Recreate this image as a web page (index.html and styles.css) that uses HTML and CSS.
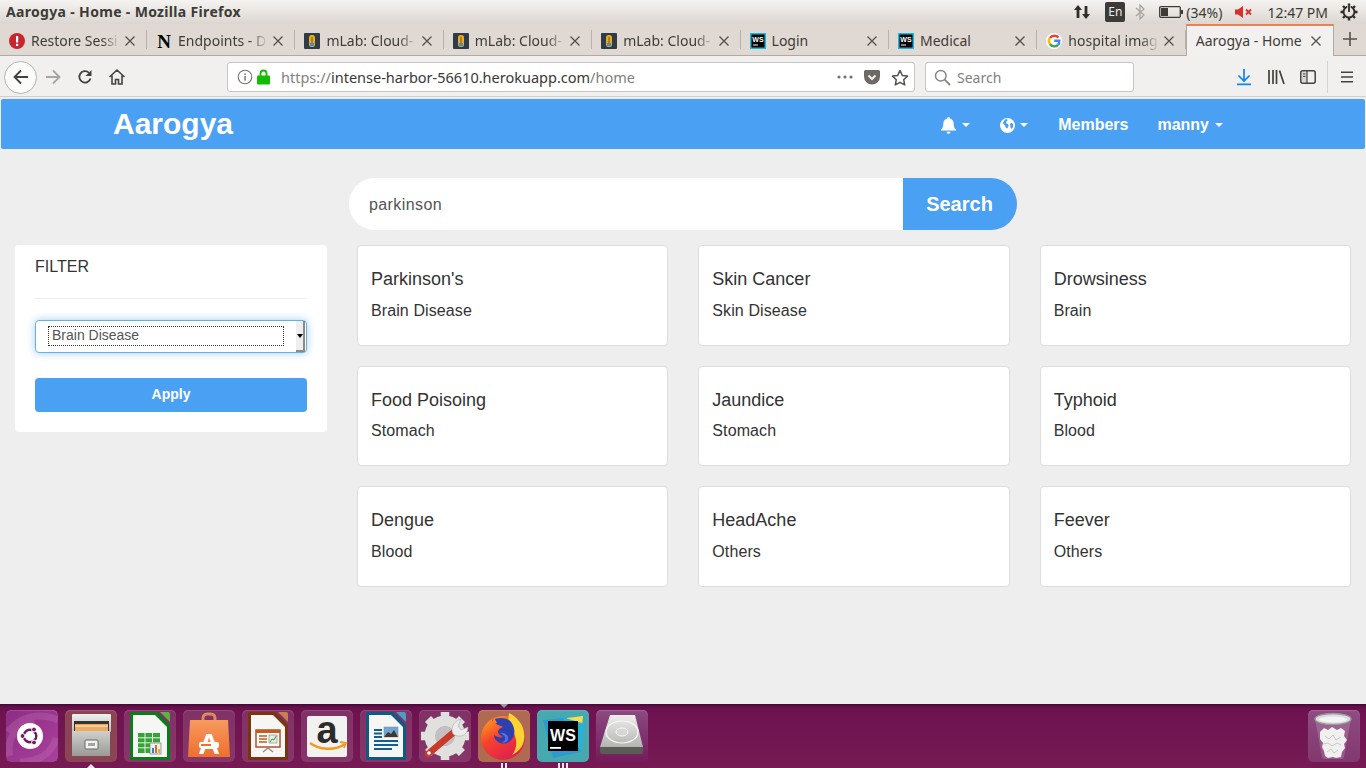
FILE: index.html
```html
<!DOCTYPE html>
<html lang="en">
<head>
    <meta charset="UTF-8">
    <meta name="viewport" content="width=device-width, initial-scale=1.0">
    <title>Aarogya - Home</title>
    <link rel="stylesheet" href="styles.css">
</head>
<body>
<svg class="sprites" aria-hidden="true">
    <symbol id="i-mlab" viewBox="0 0 16 16">
        <rect width="16" height="16" rx="1" fill="#2f3b46"/>
        <rect x="5" y="2" width="6" height="12" rx="2.500" fill="#e8ab22"/>
        <rect x="7" y="4" width="2" height="6" fill="#b97f17"/>
        <rect x="6" y="10" width="4" height="3" fill="#3f8fd6"/>
    </symbol>
    <symbol id="i-x" viewBox="0 0 12 12">
        <path d="M1.500 1.500l9 9M10.500 1.500l-9 9" stroke="#55504b" stroke-width="1.300" fill="none"/>
    </symbol>
</svg>

<!-- Ubuntu top bar -->
<header class="titlebar">
    <span class="title">Aarogya - Home - Mozilla Firefox</span>
    <div class="indicators">
        <svg class="ind-arrows" width="18" height="18" viewBox="0 0 18 18"><path d="M5 2l4 5H6.400v8H3.600V7H1zM13 16l-4-5h2.600V3h2.800v8H17z" fill="#2f2d2a"/></svg>
        <span class="lang">En</span>
        <svg class="ind-bt" width="10" height="18" viewBox="0 0 10 18"><path d="M1 5l8 7-4 4V2l4 4-8 7" fill="none" stroke="#a9a49e" stroke-width="1.300"/></svg>
        <svg class="ind-batt" width="24" height="14" viewBox="0 0 24 14"><rect x=".7" y="1.700" width="20.600" height="10.600" rx="1.200" fill="none" stroke="#3c3b37" stroke-width="1.300"/><rect x="2" y="3" width="7" height="8" fill="#3c3b37"/><rect x="22" y="5" width="2" height="4" fill="#3c3b37"/></svg>
        <span class="ind-text pct">(34%)</span>
        <svg class="ind-mute" width="18" height="14" viewBox="0 0 18 14"><path d="M0 4.500h3L8 1v12L3 9.500H0z" fill="#d4312d"/><path d="M11 4.500l5 5M16 4.500l-5 5" stroke="#d4312d" stroke-width="1.800"/></svg>
        <span class="ind-text clock">12:47 PM</span>
        <svg class="ind-power" width="18" height="18" viewBox="0 0 18 18"><g fill="none" stroke="#2f2d2a"><path d="M9 .5v17M.5 9h17M3 3l12 12M15 3L3 15" stroke-width="2.400" stroke-dasharray="2.500 12"/><circle cx="9" cy="9" r="5.500" stroke-width="2"/></g><path d="M9 2v7" stroke="#e8e3de" stroke-width="3.400"/><path d="M9 2v7" stroke="#2f2d2a" stroke-width="1.800"/></svg>
    </div>
</header>

<!-- Firefox tabs -->
<nav class="tabstrip">
    <div class="tab">
        <svg class="favicon" width="16" height="16" viewBox="0 0 16 16"><circle cx="8" cy="8" r="8" fill="#c8262c"/><rect x="7" y="3" width="2.200" height="6.500" fill="#fff"/><rect x="7" y="10.800" width="2.200" height="2.200" fill="#fff"/></svg>
        <span class="tab-label">Restore Sessi</span>
        <svg class="tab-close" width="12" height="12"><use href="#i-x"/></svg>
    </div>
    <div class="tab">
        <svg class="favicon" width="16" height="16" viewBox="0 0 16 16"><text x="8" y="14.500" text-anchor="middle" font-family="Liberation Serif" font-weight="700" font-size="19" fill="#000">N</text></svg>
        <span class="tab-label">Endpoints - D</span>
        <svg class="tab-close" width="12" height="12"><use href="#i-x"/></svg>
    </div>
    <div class="tab">
        <svg class="favicon" width="16" height="16"><use href="#i-mlab"/></svg>
        <span class="tab-label">mLab: Cloud-</span>
        <svg class="tab-close" width="12" height="12"><use href="#i-x"/></svg>
    </div>
    <div class="tab">
        <svg class="favicon" width="16" height="16"><use href="#i-mlab"/></svg>
        <span class="tab-label">mLab: Cloud-</span>
        <svg class="tab-close" width="12" height="12"><use href="#i-x"/></svg>
    </div>
    <div class="tab">
        <svg class="favicon" width="16" height="16"><use href="#i-mlab"/></svg>
        <span class="tab-label">mLab: Cloud-</span>
        <svg class="tab-close" width="12" height="12"><use href="#i-x"/></svg>
    </div>
    <div class="tab tab-plain">
        <svg class="favicon" width="16" height="16" viewBox="0 0 16 16"><rect width="16" height="16" fill="#18b8d8"/><rect x="1.500" y="1.500" width="13" height="13" fill="#000"/><text x="8" y="8.600" text-anchor="middle" font-family="Liberation Sans" font-weight="700" font-size="7" fill="#fff">WS</text><rect x="3" y="11.500" width="5" height="1" fill="#fff"/></svg>
        <span class="tab-label">Login</span>
        <svg class="tab-close" width="12" height="12"><use href="#i-x"/></svg>
    </div>
    <div class="tab tab-plain">
        <svg class="favicon" width="16" height="16" viewBox="0 0 16 16"><rect width="16" height="16" fill="#18b8d8"/><rect x="1.500" y="1.500" width="13" height="13" fill="#000"/><text x="8" y="8.600" text-anchor="middle" font-family="Liberation Sans" font-weight="700" font-size="7" fill="#fff">WS</text><rect x="3" y="11.500" width="5" height="1" fill="#fff"/></svg>
        <span class="tab-label">Medical</span>
        <svg class="tab-close" width="12" height="12"><use href="#i-x"/></svg>
    </div>
    <div class="tab">
        <svg class="favicon" width="16" height="16" viewBox="0 0 16 16"><circle cx="8" cy="8" r="8" fill="#fff"/><g fill="none" stroke-width="2.400"><path d="M12.400 4.600A5.400 5.400 0 0 0 3.900 5" stroke="#ea4335"/><path d="M3.900 5a5.400 5.400 0 0 0 0 6" stroke="#fbbc05"/><path d="M3.900 11a5.400 5.400 0 0 0 8 1" stroke="#34a853"/><path d="M11.900 12a5.400 5.400 0 0 0 1.400-4.200H8.200" stroke="#4285f4"/></g></svg>
        <span class="tab-label">hospital imag</span>
        <svg class="tab-close" width="12" height="12"><use href="#i-x"/></svg>
    </div>
    <div class="tab tab-active">
        <span class="tab-label">Aarogya - Home</span>
        <svg class="tab-close" width="12" height="12"><use href="#i-x"/></svg>
    </div>
    <svg class="tab-new" width="16" height="16" viewBox="0 0 16 16"><path d="M8 1v14M1 8h14" stroke="#55504b" stroke-width="1.600"/></svg>
</nav>

<!-- Firefox toolbar -->
<div class="toolbar">
    <button class="tool tool-back"><svg width="18" height="18" viewBox="0 0 18 18"><path d="M9 2.500L2.500 9 9 15.500M3 9h13" fill="none" stroke="#45423e" stroke-width="1.800"/></svg></button>
    <button class="tool"><svg width="18" height="18" viewBox="0 0 18 18"><path d="M9 2.500L15.500 9 9 15.500M15 9H2" fill="none" stroke="#a9a6a2" stroke-width="1.800"/></svg></button>
    <button class="tool"><svg width="16" height="16" viewBox="0 0 16 16"><path d="M13.500 9.500A5.700 5.700 0 1 1 12 3.800" fill="none" stroke="#45423e" stroke-width="1.800"/><path d="M14.500 1v6h-6z" fill="#45423e"/></svg></button>
    <button class="tool"><svg width="18" height="18" viewBox="0 0 18 18"><path d="M1.500 9L9 2l7.500 7M4 7.500V16h3.500v-4.500h3V16H14V7.500" fill="none" stroke="#45423e" stroke-width="1.600"/></svg></button>

    <div class="urlbar">
        <svg class="url-info" width="16" height="16" viewBox="0 0 16 16"><circle cx="8" cy="8" r="6.800" fill="none" stroke="#77746f" stroke-width="1.100"/><rect x="7.300" y="7" width="1.500" height="4.600" fill="#77746f"/><rect x="7.300" y="4.400" width="1.500" height="1.500" fill="#77746f"/></svg>
        <svg class="url-lock" width="13" height="16" viewBox="0 0 13 16"><path d="M3.500 7V4.500a3 3 0 0 1 6 0V7" fill="none" stroke="#12bc00" stroke-width="1.800"/><rect y="6.500" width="13" height="9" rx="1" fill="#12bc00"/></svg>
        <span class="url-text"><span class="url-dim">https://</span>intense-harbor-56610.herokuapp.com<span class="url-dim">/home</span></span>
        <svg class="url-dots" width="16" height="4" viewBox="0 0 16 4"><circle cx="2" cy="2" r="1.600" fill="#77746f"/><circle cx="8" cy="2" r="1.600" fill="#77746f"/><circle cx="14" cy="2" r="1.600" fill="#77746f"/></svg>
        <svg class="url-pocket" width="16" height="15" viewBox="0 0 16 15"><path d="M1.500 0h13A1.500 1.500 0 0 1 16 1.500V6.500A8 8 0 0 1 0 6.500V1.500A1.500 1.500 0 0 1 1.500 0z" fill="#6d6a66"/><path d="M4.500 5.500L8 9l3.500-3.500" fill="none" stroke="#f1f0ef" stroke-width="2"/></svg>
        <svg class="url-star" width="18" height="17" viewBox="0 0 18 17"><path d="M9 1.500l2.300 4.900 5.200.7-3.800 3.600 1 5.200L9 13.300l-4.700 2.600 1-5.200L1.500 7.100l5.200-.7z" fill="none" stroke="#55524e" stroke-width="1.500" stroke-linejoin="round"/></svg>
    </div>
    <div class="searchbar">
        <svg width="17" height="17" viewBox="0 0 17 17"><circle cx="6.800" cy="6.800" r="5.300" fill="none" stroke="#8a8783" stroke-width="1.500"/><path d="M10.700 10.700l5.300 5.300" stroke="#8a8783" stroke-width="1.800"/></svg>
        <span class="search-hint">Search</span>
    </div>

    <button class="tool tool-download"><svg width="16" height="18" viewBox="0 0 16 18"><path d="M8 1v11M2.500 7.500L8 13l5.500-5.500" fill="none" stroke="#0a84ff" stroke-width="1.700"/><rect x="1" y="15.500" width="14" height="1.700" fill="#0a84ff"/></svg></button>
    <button class="tool"><svg width="18" height="16" viewBox="0 0 18 16"><path d="M2 1v14M6 1v14M9.500 1v14M12.500 1.500L17 15" fill="none" stroke="#45423e" stroke-width="1.700"/></svg></button>
    <button class="tool"><svg width="16" height="14" viewBox="0 0 16 14"><rect x=".8" y=".8" width="14.400" height="12.400" rx="2" fill="none" stroke="#45423e" stroke-width="1.500"/><rect x="2" y="2" width="5" height="10" fill="#45423e" opacity=".15"/><path d="M7 1v12M3 4h2.500M3 6.500h2.500" stroke="#45423e" stroke-width="1.200"/></svg></button>
    <span class="tool-sep"></span>
    <button class="tool"><svg width="14" height="12" viewBox="0 0 14 12"><path d="M1 1.200h12M1 6h12M1 10.800h12" stroke="#45423e" stroke-width="1.600"/></svg></button>
</div>

<!-- The page itself -->
<main class="page">
    <div class="navbar">
        <a class="brand">Aarogya</a>
        <ul class="nav-links">
            <li class="nav-item nav-bell"><svg width="17" height="17" viewBox="0 0 17 17"><path d="M8.500 0a1.300 1.300 0 0 1 1.300 1.500c2.700.6 3.900 2.700 3.900 5.500 0 3 1 4.400 2.300 5.600v1H1v-1C2.300 11.400 3.300 10 3.300 7c0-2.800 1.200-4.900 3.900-5.500A1.300 1.300 0 0 1 8.500 0zM6.500 14.800h4a2 2 0 0 1-4 0z" fill="#fff"/></svg><span class="caret"></span></li>
            <li class="nav-item nav-globe"><svg width="15" height="15" viewBox="0 0 15 15"><circle cx="7.500" cy="7.500" r="7.500" fill="#fff"/><path d="M5 1.500c1-.5 2-.5 2.500 0S7 3 6.500 3.500 6 5 6.500 5.500s1.500.5 2 1.500-.5 2-1 3-1.500 0-2-1-.5-2-1.500-2.500S3 5 3 5s1-2.500 2-3.500zM11 5c1 0 2 .5 2.300 2s-.8 3-1.500 3.500-1.300-.5-1.300-1.500-.5-1.500-.5-2.200.5-1.800 1-1.800z" fill="#4a9ff2"/></svg><span class="caret"></span></li>
            <li class="nav-item nav-members">Members</li>
            <li class="nav-item nav-user">manny<span class="caret"></span></li>
        </ul>
    </div>

    <form class="search-form">
        <input class="search-input" type="text" value="parkinson">
        <button class="search-btn" type="button">Search</button>
    </form>

    <div class="content">
        <aside class="filter">
            <div class="filter-title">FILTER</div>
            <div class="filter-select">
                <span class="select-value">Brain Disease</span>
                <span class="select-arrow"></span>
            </div>
            <button class="apply-btn" type="button">Apply</button>
        </aside>
        <section class="results">
            <div class="card"><h4>Parkinson's</h4><p>Brain Disease</p></div>
            <div class="card"><h4>Skin Cancer</h4><p>Skin Disease</p></div>
            <div class="card"><h4>Drowsiness</h4><p>Brain</p></div>
            <div class="card"><h4>Food Poisoing</h4><p>Stomach</p></div>
            <div class="card"><h4>Jaundice</h4><p>Stomach</p></div>
            <div class="card"><h4>Typhoid</h4><p>Blood</p></div>
            <div class="card"><h4>Dengue</h4><p>Blood</p></div>
            <div class="card"><h4>HeadAche</h4><p>Others</p></div>
            <div class="card"><h4>Feever</h4><p>Others</p></div>
        </section>
    </div>
</main>

<!-- Unity launcher, along the bottom -->
<footer class="dock">
    <div class="launcher launcher-ubuntu">
        <svg width="52" height="52" viewBox="0 0 52 52">
            <path d="M2 22C14 6 34 2 52 10M4 46C0 30 10 14 28 10M50 28C46 44 32 52 14 52" fill="none" stroke="#d391c6" stroke-width="7" opacity=".22"/>
            <circle cx="24" cy="26" r="13" fill="#fff"/>
            <circle cx="24" cy="26" r="6.300" fill="none" stroke="#6a1b62" stroke-width="2.400"/>
            <circle cx="16.500" cy="26" r="2.400" fill="#6a1b62" stroke="#fff"/>
            <circle cx="28" cy="19.500" r="2.400" fill="#6a1b62" stroke="#fff"/>
            <circle cx="28" cy="32.500" r="2.400" fill="#6a1b62" stroke="#fff"/>
        </svg>
    </div>
    <div class="launcher launcher-files">
        <svg width="52" height="52" viewBox="0 0 52 52">
            <defs>
                <linearGradient id="g-drawer" x1="0" y1="0" x2="0" y2="1"><stop offset="0" stop-color="#cfcfcd"/><stop offset="1" stop-color="#9a9a98"/></linearGradient>
                <linearGradient id="g-lid" x1="0" y1="0" x2="0" y2="1"><stop offset="0" stop-color="#f0f0ee"/><stop offset="1" stop-color="#bdbdbb"/></linearGradient>
            </defs>
            <rect x="7" y="4" width="39" height="18" rx="1" fill="url(#g-lid)"/>
            <rect x="9" y="11" width="35" height="11" fill="#37332f"/>
            <rect x="10" y="14" width="33" height="8" fill="#f0a95e"/>
            <rect x="10" y="15.500" width="33" height="1.300" fill="#fbe0bc"/>
            <path d="M7 21h38v25H7z" fill="url(#g-drawer)"/>
            <rect x="20" y="30" width="13" height="9" rx="1" fill="#f2f2f0" stroke="#666"/>
            <rect x="23" y="33" width="7" height="3" fill="#a5a5a5"/>
        </svg>
    </div>
    <div class="launcher launcher-calc">
        <svg width="52" height="52" viewBox="0 0 52 52">
            <path d="M36 2h8a2 2 0 0 1 2 2v8z" fill="#5fb045"/>
            <path d="M6 2h27l13 13v35H6z" fill="#0d7a1c"/>
            <path d="M9 5h22l12 12v30H9z" fill="#f6f6f4"/>
            <rect x="14" y="23" width="22" height="20" fill="#35a436"/>
            <path d="M14 27.800h22M14 32.800h22M14 37.800h22M21 23v20M28.500 23v20" stroke="#e4f3e0" stroke-width="1"/>
            <rect x="26" y="33" width="11" height="11" fill="#eee" stroke="#777" stroke-width=".7"/>
            <rect x="28" y="38" width="2" height="5" fill="#2f7fd1"/><rect x="31" y="35" width="2" height="8" fill="#e06c1e"/><rect x="34" y="39" width="2" height="4" fill="#e4b41c"/>
        </svg>
    </div>
    <div class="launcher launcher-store">
        <svg width="52" height="52" viewBox="0 0 52 52">
            <defs><linearGradient id="g-bag" x1="0" y1="0" x2="0" y2="1"><stop offset="0" stop-color="#f79a5e"/><stop offset="1" stop-color="#ee6f2d"/></linearGradient></defs>
            <path d="M20 13V8a4 4 0 0 1 4-4h4a4 4 0 0 1 4 4v5" fill="none" stroke="#e08a55" stroke-width="3"/>
            <path d="M7 10h38l2 37H5z" fill="url(#g-bag)"/>
            <text x="26" y="44" text-anchor="middle" font-family="Liberation Sans" font-weight="700" font-size="30" fill="#fff">A</text>
            <rect x="16" y="32" width="20" height="6" rx="2" fill="#fff"/>
            <rect x="18" y="34" width="10" height="2" fill="#ee6f2d"/>
        </svg>
    </div>
    <div class="launcher launcher-impress">
        <svg width="52" height="52" viewBox="0 0 52 52">
            <path d="M36 2h8a2 2 0 0 1 2 2v8z" fill="#c9804d"/>
            <path d="M6 2h27l13 13v35H6z" fill="#7a3410"/>
            <path d="M9 5h22l12 12v30H9z" fill="#f6f6f4"/>
            <rect x="14" y="20" width="24" height="17" fill="#fdfdfb" stroke="#a8481a" stroke-width="1.400"/>
            <rect x="14" y="20" width="24" height="3" fill="#c55a20"/>
            <path d="M17 26h8M17 29h8M17 32h8" stroke="#c55a20" stroke-width="1.600"/>
            <rect x="27" y="25" width="8" height="8" fill="#e6efe0" stroke="#777" stroke-width=".6"/>
            <path d="M28 32l2-3 2 1 2-4" fill="none" stroke="#3f9a3a"/>
            <path d="M26 38l-5 4M26 38l5 4" stroke="#888" stroke-width="1.200"/>
        </svg>
    </div>
    <div class="launcher launcher-amazon">
        <svg width="52" height="52" viewBox="0 0 52 52">
            <rect x="6" y="6" width="40" height="41" rx="2" fill="#f2f2f0"/>
            <text x="26" y="33" text-anchor="middle" font-family="Liberation Sans" font-weight="700" font-size="38" fill="#2b2b2b">a</text>
            <path d="M9 33c9 7 25 8 35 1" fill="none" stroke="#f39a1d" stroke-width="2.400"/>
            <path d="M39 32l6 1-2 5" fill="none" stroke="#f39a1d" stroke-width="1.800"/>
        </svg>
    </div>
    <div class="launcher launcher-writer">
        <svg width="52" height="52" viewBox="0 0 52 52">
            <path d="M36 2h8a2 2 0 0 1 2 2v8z" fill="#4f9cc9"/>
            <path d="M6 2h27l13 13v35H6z" fill="#0d5a83"/>
            <path d="M9 5h22l12 12v30H9z" fill="#f6f6f4"/>
            <path d="M14 20h8M14 23.500h8M14 27h8M14 31h24M14 35h24M14 39h18" stroke="#135f8b" stroke-width="1.800"/>
            <rect x="24" y="17" width="14" height="10" fill="#6fa6d6" stroke="#888" stroke-width=".5"/>
            <path d="M24 27l4-5 3 2 3-4 4 7z" fill="#3f3a2c"/>
        </svg>
    </div>
    <div class="launcher launcher-settings">
        <svg width="52" height="52" viewBox="0 0 52 52">
            <g fill="none" stroke="#e0e0de">
                <circle cx="26" cy="26" r="15" stroke-width="11"/>
                <path d="M26 2v48M2 26h48M9 9l34 34M43 9L9 43" stroke-width="8.500" stroke-dasharray="8 32"/>
            </g>
            <circle cx="26" cy="26" r="10" fill="#c3bfc2"/>
            <path d="M9 44l26-22" stroke="#c9392a" stroke-width="6.500" stroke-linecap="round"/>
            <circle cx="10" cy="43" r="1.800" fill="#fff"/>
            <path d="M34 24c-3-6 1-13 8-15l-3 7 3 4 7-3c0 8-8 12-15 7z" fill="#ececea" stroke="#a8a8a6" stroke-width=".6"/>
        </svg>
    </div>
    <div class="launcher launcher-firefox">
        <svg width="52" height="52" viewBox="0 0 52 52">
            <defs><linearGradient id="g-fox" x1="0" y1="0" x2=".6" y2="1"><stop offset="0" stop-color="#ffb01e"/><stop offset=".5" stop-color="#f5432c"/><stop offset="1" stop-color="#e0204f"/></linearGradient></defs>
            <circle cx="25" cy="28" r="22" fill="url(#g-fox)"/>
            <path d="M31 3c10 5 17 15 15 27-1 7-6 12-12 15 5-6 5-13 3-19-2-7-8-11-6-23z" fill="#ffd42e"/>
            <path d="M14 10c6-3 15-3 19 2 3 4 4 9 3 13-2 7-9 10-14 8-4-2-6-5-6-8 3 2 6 3 9 2-3-2-5-3-5-5 0-3 3-4 5-5-3-2-8-2-11-7z" fill="#2e3fb0"/>
            <path d="M22 23c3-1 7 1 8 4 1 4-3 7-7 5 3 0 5-2 4-5-1-2-3-3-5-4z" fill="#5470e8"/>
            <path d="M16 7l3 6-6 2z" fill="#ff7a1f"/>
        </svg>
    </div>
    <div class="launcher launcher-webstorm">
        <svg width="52" height="52" viewBox="0 0 52 52">
            <path d="M30 8l16-2-2 20-12-4z" fill="#f4e04d"/>
            <path d="M22 6l26 8-4 26-20-2z" fill="#27b3d6"/>
            <path d="M6 10l20-2 18 34-28 6z" fill="#2596d8" opacity=".75"/>
            <rect x="11" y="11" width="30" height="30" fill="#000"/>
            <text x="26" y="31" text-anchor="middle" font-family="Liberation Sans" font-weight="700" font-size="16" fill="#fff">WS</text>
            <rect x="13" y="37" width="11" height="1.800" fill="#fff"/>
        </svg>
    </div>
    <div class="launcher launcher-disk">
        <svg width="52" height="52" viewBox="0 0 52 52">
            <defs><linearGradient id="g-disk" x1="0" y1="0" x2="0" y2="1"><stop offset="0" stop-color="#eeeeec"/><stop offset="1" stop-color="#b4b4b2"/></linearGradient></defs>
            <path d="M14 5h25l8 32H4z" fill="url(#g-disk)"/>
            <path d="M4 37h43v5a2 2 0 0 1-2 2H6a2 2 0 0 1-2-2z" fill="#5d5b57"/>
            <ellipse cx="26" cy="22" rx="16" ry="11" fill="none" stroke="#f8f8f6" stroke-width="1.200"/>
            <ellipse cx="26" cy="22" rx="6" ry="4" fill="#d6d6d4" stroke="#f8f8f6"/>
        </svg>
    </div>
    <div class="launcher launcher-trash">
        <svg width="52" height="52" viewBox="0 0 52 52">
            <path d="M7 9l7 38a2 2 0 0 0 2 2h18a2 2 0 0 0 2-2l7-38z" fill="#fff" opacity=".16"/>
            <path d="M12 22l4-4 4 2 4-3 5 3 4-2 4 3-1 5 3 4-3 4 1 4-3 4-1 5-5 1-3-1-5 1-3-2-1-5-2-4 1-4-3-4z" fill="#f0f0f0"/>
            <path d="M17 26l4 3 4-4 3 5 5-3M15 34l5-1 4 3 5-3 4 2M19 42l4-3 3 4 4-3" stroke="#bdbdbd" fill="none" stroke-width=".8"/>
            <ellipse cx="25" cy="9" rx="18" ry="5.500" fill="#dcdcdc" stroke="#9a9a9a" stroke-width="1.400"/>
            <ellipse cx="25" cy="9.500" rx="14" ry="3" fill="#f4f4f4"/>
        </svg>
    </div>
    <span class="pip-arrow pip-files"></span>
    <span class="pip-top"></span>
    <span class="pips pips-firefox"><i></i><i></i></span>
    <span class="pips pips-webstorm"><i></i><i></i><i></i></span>
</footer>
</body>
</html>
```

FILE: styles.css
```css
* {
    box-sizing: border-box;
}
html, body {
    margin: 0;
    height: 768px;
    overflow: hidden;
}
body {
    display: flex;
    flex-direction: column;
    font-family: 'Liberation Sans', Arial, sans-serif;
    background-color: #eeeeee;
}
.sprites {
    position: absolute;
    width: 0;
    height: 0;
}
button {
    border: none;
    background: none;
    padding: 0;
    font-family: inherit;
}

/* top bar */
.titlebar {
    height: 24px;
    display: flex;
    align-items: center;
    justify-content: space-between;
    padding: 0 8px 0 6px;
    background: linear-gradient(#f5f3f1, #dcd6d0);
    font-family: 'Noto Sans', sans-serif;
    color: #3c3b37;
}
.title {
    font-size: 14px;
    font-weight: 700;
    letter-spacing: .33px;
    margin-top: -1px;
}
.indicators {
    display: flex;
    align-items: center;
}
.lang {
    width: 20px;
    height: 20px;
    margin-left: 14px;
    border-radius: 2px;
    background-color: #3c3b37;
    color: #f0eeec;
    font-size: 12px;
    line-height: 20px;
    text-align: center;
}
.ind-bt {
    margin-left: 10px;
}
.ind-batt {
    margin-left: 14px;
}
.ind-text {
    font-size: 14px;
}
.pct {
    margin-left: 3px;
}
.ind-mute {
    margin-left: 13px;
}
.clock {
    margin-left: 14px;
}
.ind-power {
    margin-left: 12px;
}

/* tabs */
.tabstrip {
    height: 32px;
    display: flex;
    align-items: stretch;
    background-color: #e0d9d3;
    border-bottom: 1px solid #b1aaa4;
    font-family: 'Noto Sans', sans-serif;
    font-size: 14px;
    color: #3f3c38;
}
.tab {
    width: 148.4px;
    flex: none;
    display: flex;
    align-items: center;
    padding: 2px 11px 0 9px;
    position: relative;
}
.tab::after {
    content: "";
    position: absolute;
    right: 0;
    top: 6px;
    bottom: 6px;
    width: 1px;
    background-color: #b9b1aa;
}
.tab:first-child {
    width: 147px;
}
.favicon {
    flex: none;
    margin-right: 6px;
}
.tab-label {
    flex: 1;
    min-width: 0;
    white-space: nowrap;
    overflow: hidden;
    -webkit-mask-image: linear-gradient(to right, #000 80%, transparent 100%);
    mask-image: linear-gradient(to right, #000 80%, transparent 100%);
}
.tab-close {
    flex: none;
    margin-left: 4px;
}
.tab-plain .tab-label,
.tab-active .tab-label {
    -webkit-mask-image: none;
    mask-image: none;
}
.tab-active {
    background-color: #f2f1f0;
    border-top: 2px solid #ea7f5a;
    border-left: 1px solid #b1aaa4;
    border-right: 1px solid #b1aaa4;
    margin-bottom: -1px;
    padding-top: 0;
    padding-bottom: 1px;
}
.tab-active::after {
    display: none;
}
.tab-new {
    margin: 7px 0 0 8px;
}

/* toolbar */
.toolbar {
    height: 41px;
    display: flex;
    align-items: center;
    padding: 2px 0 0 4px;
    background-color: #f1f0ef;
    border-bottom: 1px solid #d2d0ce;
    font-family: 'Noto Sans', sans-serif;
}
.tool {
    width: 32px;
    height: 32px;
    flex: none;
    display: flex;
    align-items: center;
    justify-content: center;
}
.tool-back {
    width: 33px;
    height: 33px;
    border: 1px solid #b6b4b1;
    border-radius: 50%;
    background-color: #fbfbfa;
}
.urlbar, .searchbar {
    height: 30px;
    display: flex;
    align-items: center;
    background-color: #fff;
    border: 1px solid #c8c6c3;
    border-radius: 3px;
    font-size: 14.5px;
}
.urlbar {
    width: 688px;
    margin-left: 94px;
    padding-left: 9px;
}
.url-lock {
    margin-left: 4px;
}
.url-text {
    flex: 1;
    margin-left: 11px;
    color: #3a3835;
    white-space: nowrap;
}
.url-dim {
    color: #82807c;
}
.url-pocket {
    margin-left: 11px;
}
.url-star {
    margin: 0 5px 0 11px;
}
.searchbar {
    width: 209px;
    margin-left: 10px;
    padding-left: 8px;
    color: #82807c;
}
.search-hint {
    margin-left: 6px;
    font-size: 14px;
}
.tool-download {
    margin-left: 94px;
}
.tool-sep {
    width: 1px;
    height: 32px;
    margin: 0 3px;
    background-color: #d6d4d2;
}

/* page */
.page {
    flex: 1;
    padding-top: 2px;
    background-color: #eeeeee;
}
.navbar {
    height: 50px;
    margin: 0 1px;
    padding-left: 112px;
    display: flex;
    align-items: center;
    justify-content: space-between;
    background-color: #4aa0f3;
    border-radius: 2px;
    color: #fff;
}
.brand {
    font-size: 30px;
    font-weight: 700;
}
.nav-links {
    list-style: none;
    display: flex;
    align-items: center;
    margin: 0;
    padding: 2px 142px 0 0;
    font-size: 16px;
    font-weight: 700;
}
.nav-item {
    display: flex;
    align-items: center;
}
.nav-globe {
    margin-left: 30px;
}
.nav-members {
    margin-left: 30px;
}
.nav-user {
    margin-left: 29px;
}
.nav-user .caret {
    margin-left: 6px;
}
.caret {
    width: 0;
    height: 0;
    margin-left: 5px;
    border-top: 4px solid #fff;
    border-left: 4px solid transparent;
    border-right: 4px solid transparent;
}
.search-form {
    display: flex;
    width: 668px;
    height: 52px;
    margin: 29px 0 0 349px;
}
.search-input {
    flex: 1;
    min-width: 0;
    padding: 2px 20px 0;
    border: none;
    border-radius: 26px 0 0 26px;
    background-color: #fff;
    color: #555;
    font-family: inherit;
    font-size: 16px;
    letter-spacing: .4px;
}
.search-btn {
    width: 114px;
    padding-top: 0;
    padding-right: 1px;
    border-radius: 0 26px 26px 0;
    background-color: #4aa0f3;
    color: #fff;
    font-size: 20px;
    font-weight: 700;
}
.content {
    display: flex;
    gap: 30px;
    margin-top: 15px;
    padding: 0 15px;
    align-items: flex-start;
}
.filter {
    width: 312px;
    flex: none;
    padding: 13px 20px 20px;
    background-color: #fff;
    border-radius: 4px;
}
.filter-title {
    padding-bottom: 22px;
    border-bottom: 1px solid #eeeeee;
    color: #333;
    font-size: 16px;
    line-height: 18px;
    margin-bottom: 21px;
}
.filter-select {
    height: 33px;
    display: flex;
    align-items: center;
    justify-content: space-between;
    padding: 0 1px 0 12px;
    border: 1px solid #66afe9;
    border-radius: 4px;
    background-color: #fff;
    box-shadow: 0 0 8px rgba(102, 175, 233, 0.6);
    margin-bottom: 25px;
}
.select-value {
    width: 236px;
    height: 20px;
    margin-top: -1px;
    padding-left: 3px;
    border: 1px dotted #333;
    color: #555;
    font-size: 14px;
    line-height: 17px;
}
.select-arrow {
    width: 9px;
    height: 31px;
    position: relative;
    background-color: #eeeeee;
    border-right: 2px solid #8a8a8a;
    border-bottom: 2px solid #8a8a8a;
}
.select-arrow::after {
    content: "";
    position: absolute;
    left: 1px;
    top: 13px;
    border-top: 4px solid #000;
    border-left: 3px solid transparent;
    border-right: 3px solid transparent;
}
.apply-btn {
    display: block;
    width: 100%;
    height: 34px;
    padding-bottom: 2px;
    border-radius: 4px;
    background-color: #4aa0f3;
    color: #fff;
    font-size: 14px;
    font-weight: 700;
}
.results {
    flex: 1;
    display: grid;
    grid-template-columns: repeat(3, 1fr);
    grid-auto-rows: 100.5px;
    gap: 20px 30px;
}
.card {
    padding: 23px 13px 0 13px;
    background-color: #fff;
    border: 1px solid #dddddd;
    border-radius: 4px;
    color: #333;
}
.card h4 {
    margin: 0;
    font-size: 18px;
    font-weight: 400;
    line-height: 20px;
}
.card p {
    margin: 11.5px 0 0;
    font-size: 16px;
    line-height: 20px;
    letter-spacing: .1px;
}

/* launcher */
.dock {
    height: 64px;
    position: relative;
    display: flex;
    gap: 7px;
    padding: 6px 6px 0;
    background: linear-gradient(#3f0a33 0, #650f4b 3px, #6e1350 8px, #751a53 100%);
}
.launcher {
    width: 52px;
    height: 52px;
    flex: none;
    border-radius: 5px;
    background-color: rgba(255, 255, 255, 0.13);
    box-shadow: inset 0 1px 1px rgba(255, 255, 255, 0.15);
}
.launcher svg {
    display: block;
}
.launcher-ubuntu {
    background: linear-gradient(135deg, #8e2c85, #a8409c);
}
.launcher-files {
    background-color: #8b4454;
}
.launcher-firefox {
    background-color: #b06a52;
}
.launcher-webstorm {
    background-color: #47a9b0;
}
.launcher-disk {
    background: linear-gradient(#8c4a82, #741b5a);
}
.launcher-trash {
    margin-left: auto;
    background: linear-gradient(#8e4c82, #82386f);
}
.pip-arrow {
    position: absolute;
    left: 87px;
    bottom: 0;
    border-bottom: 4px solid #e8e8e8;
    border-left: 4px solid transparent;
    border-right: 4px solid transparent;
}
.pip-top {
    position: absolute;
    left: 500px;
    top: 0;
    border-top: 4px solid #9a9a9a;
    border-left: 4px solid transparent;
    border-right: 4px solid transparent;
}
.pips {
    position: absolute;
    bottom: 0;
    display: flex;
    gap: 2px;
}
.pips i {
    width: 2px;
    height: 5px;
    background-color: #e8e8e8;
}
.pips-firefox {
    left: 501px;
}
.pips-webstorm {
    left: 558px;
}
```
